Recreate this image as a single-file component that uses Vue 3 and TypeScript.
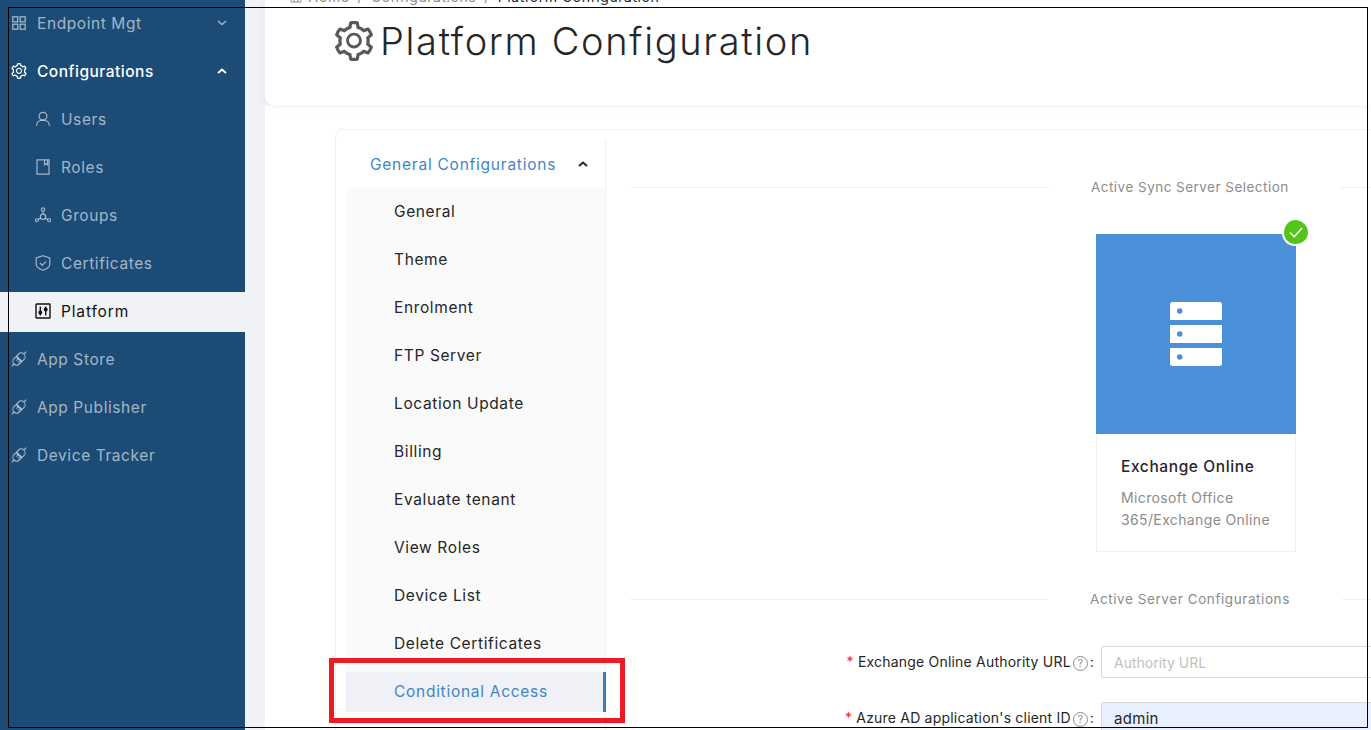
<script setup lang="ts">
const subItems: string[] = ['General', 'Theme', 'Enrolment', 'FTP Server', 'Location Update', 'Billing', 'Evaluate tenant', 'View Roles', 'Device List', 'Delete Certificates']
const gear = 'M924.8 625.7l-65.5-56c3.1-19 4.7-38.4 4.7-57.8s-1.6-38.8-4.7-57.8l65.5-56a32.03 32.03 0 0 0 9.3-35.2l-.9-2.6a443.74 443.74 0 0 0-79.7-137.9l-1.8-2.1a32.12 32.12 0 0 0-35.1-9.5l-81.3 28.9c-30-24.6-63.5-44-99.7-57.6l-15.7-85a32.05 32.05 0 0 0-25.8-25.7l-2.7-.5c-52.1-9.4-106.9-9.4-159 0l-2.7.5a32.05 32.05 0 0 0-25.8 25.7l-15.8 85.4a351.86 351.86 0 0 0-99 57.4l-81.9-29.1a32 32 0 0 0-35.1 9.5l-1.8 2.1a446.02 446.02 0 0 0-79.7 137.9l-.9 2.6c-4.5 12.5-.8 26.5 9.3 35.2l66.3 56.6c-3.1 18.8-4.6 38-4.6 57.1 0 19.2 1.5 38.4 4.6 57.1L99 625.5a32.03 32.03 0 0 0-9.3 35.2l.9 2.6c18.1 50.4 44.9 96.9 79.7 137.9l1.8 2.1a32.12 32.12 0 0 0 35.1 9.5l81.9-29.1c29.8 24.5 63.1 43.9 99 57.4l15.8 85.4a32.05 32.05 0 0 0 25.8 25.7l2.7.5a449.4 449.4 0 0 0 159 0l2.7-.5a32.05 32.05 0 0 0 25.8-25.7l15.7-85a350 350 0 0 0 99.7-57.6l81.3 28.9a32 32 0 0 0 35.1-9.5l1.8-2.1c34.8-41.1 61.6-87.5 79.7-137.9l.9-2.6c4.5-12.3.8-26.3-9.3-35zM788.3 465.9c2.5 15.1 3.8 30.6 3.8 46.1s-1.3 31-3.8 46.1l-6.6 40.1 74.7 63.9a370.03 370.03 0 0 1-42.6 73.6L721 702.8l-31.4 25.8c-23.9 19.6-50.5 35-79.3 45.8l-38.1 14.3-17.9 97a377.5 377.5 0 0 1-85 0l-17.9-97.2-37.8-14.5c-28.5-10.8-55-26.2-78.7-45.7l-31.4-25.9-93.4 33.2c-17-22.9-31.2-47.6-42.6-73.6l75.5-64.5-6.5-40c-2.4-14.9-3.7-30.3-3.7-45.5 0-15.3 1.2-30.6 3.7-45.5l6.5-40-75.5-64.5c11.3-26.1 25.6-50.7 42.6-73.6l93.4 33.2 31.4-25.9c23.7-19.5 50.2-34.9 78.7-45.7l37.9-14.3 17.9-97.2c28.1-3.2 56.8-3.2 85 0l17.9 97 38.1 14.3c28.7 10.8 55.4 26.2 79.3 45.8l31.4 25.8 92.8-32.9c17 22.9 31.2 47.6 42.6 73.6L781.8 426l6.5 39.9zM512 326c-97.2 0-176 78.8-176 176s78.8 176 176 176 176-78.8 176-176-78.8-176-176-176zm79.2 255.2A111.6 111.6 0 0 1 512 614c-29.9 0-58-11.7-79.2-32.8A111.6 111.6 0 0 1 400 502c0-29.9 11.7-58 32.8-79.2C454 401.6 482.1 390 512 390c29.9 0 58 11.6 79.2 32.8A111.6 111.6 0 0 1 624 502c0 29.9-11.7 58-32.8 79.2z'
</script>

<template>
  <div class="page">
    <aside class="sidebar">
      <div class="nav-item">
        <svg class="ico" viewBox="0 0 16 16" fill="none" stroke="currentColor" stroke-width="1.3"><rect x="1.800" y="1.800" width="5" height="5"/><rect x="9.200" y="1.800" width="5" height="5"/><rect x="1.800" y="9.200" width="5" height="5"/><rect x="9.200" y="9.200" width="5" height="5"/></svg>
        <span class="grow">Endpoint Mgt</span>
        <svg class="caret" viewBox="0 0 10 6" fill="none" stroke="currentColor" stroke-width="1.400"><path d="M1 1l4 3.600L9 1"/></svg>
      </div>
      <div class="nav-item open">
        <svg class="ico" viewBox="64 64 896 896" fill="currentColor"><path :d="gear"/></svg>
        <span class="grow">Configurations</span>
        <svg class="caret" viewBox="0 0 10 6" fill="none" stroke="currentColor" stroke-width="2"><path d="M1 5l4-3.400L9 5"/></svg>
      </div>
      <div class="nav-item sub">
        <svg class="ico" viewBox="0 0 16 16" fill="none" stroke="currentColor" stroke-width="1.200"><circle cx="8" cy="5.200" r="3.900"/><path d="M1.500 15c0-3.600 2.700-5.900 6.500-5.900s6.500 2.300 6.500 5.900"/></svg>
        <span>Users</span>
      </div>
      <div class="nav-item sub">
        <svg class="ico" viewBox="0 0 16 16" fill="none" stroke="currentColor" stroke-width="1.200"><path d="M2 .8h12v14.400H2zM9.500 .8v5l1.500-1 1.500 1v-5"/></svg>
        <span>Roles</span>
      </div>
      <div class="nav-item sub">
        <svg class="ico" viewBox="0 0 16 16" fill="none" stroke="currentColor" stroke-width="1.100"><circle cx="8" cy="2.600" r="1.700"/><circle cx="1.900" cy="13.300" r="1.500"/><circle cx="14.100" cy="13.300" r="1.500"/><circle cx="8" cy="9.800" r="2.700"/><path d="M8 4.300v2.800M3.300 12.500l2.400-1.400M12.700 12.500l-2.400-1.400"/></svg>
        <span>Groups</span>
      </div>
      <div class="nav-item sub">
        <svg class="ico" viewBox="0 0 16 16" fill="none" stroke="currentColor" stroke-width="1.200"><path d="M8 .7l6.800 2.300v6.300c0 2.800-3.600 5-6.800 6-3.200-1-6.800-3.200-6.800-6V3z"/><path d="M5 8l2.300 2.300 3.700-4"/></svg>
        <span>Certificates</span>
      </div>
      <div class="nav-item sub selected">
        <svg class="ico" viewBox="0 0 16 16" fill="none" stroke="currentColor" stroke-width="1.400"><rect x="1" y="1" width="14" height="14" rx=".5"/><path d="M5.300 3.500v9M10.700 3.500v9"/><circle cx="5.300" cy="9.500" r="1.300" fill="currentColor"/><circle cx="10.700" cy="6.500" r="1.300" fill="currentColor"/></svg>
        <span>Platform</span>
      </div>
      <div v-for="name in ['App Store', 'App Publisher', 'Device Tracker']" :key="name" class="nav-item">
        <svg class="ico" viewBox="0 0 16 16" fill="none" stroke="currentColor" stroke-width="1.100"><path d="M5 5.600l5.400 5.400-2 2a3.800 3.800 0 0 1-5.400-5.400zM11 10.400L5.600 5l2-2a3.800 3.800 0 0 1 5.400 5.400zM.6 15.400l2.400-2.400M15.400.6L13 3M7.200 7.800L5.400 9.600M9 9.600l-1.800 1.800"/></svg>
        <span>{{ name }}</span>
      </div>
    </aside>

    <main class="main">
      <header class="head">
        <div class="crumbs">
          <svg class="crumb-ico" viewBox="0 0 12 12" fill="none" stroke="currentColor"><path d="M1 1h10v10H1zM1 4h10M4 4v7M8 4v7"/></svg>
          <span>Home</span><i>/</i><span>Configurations</span><i>/</i><b>Platform Configuration</b>
        </div>
        <h1 class="title">
          <svg class="title-ico" viewBox="64 64 896 896" fill="#595959"><path :d="gear"/></svg>
          <span>Platform Configuration</span>
        </h1>
      </header>

      <section class="body">
        <div class="panel">
          <nav class="menu">
            <div class="menu-head">
              <span>General Configurations</span>
              <svg class="menu-caret" viewBox="0 0 10 6" fill="none" stroke="#262626" stroke-width="2"><path d="M1 5l4-3.400L9 5"/></svg>
            </div>
            <div class="menu-list">
              <div v-for="s in subItems" :key="s" class="menu-item">{{ s }}</div>
              <div class="menu-item active">Conditional Access</div>
            </div>
          </nav>

          <div class="content">
            <div class="divider first"><span>Active Sync Server Selection</span></div>
            <div class="card-row">
              <div class="card">
                <div class="cover">
                  <svg class="server" viewBox="0 0 52 64">
                    <g fill="#fff">
                      <path d="M2.500 0h47a2.500 2.500 0 0 1 2.500 2.500V18H0V2.500A2.500 2.500 0 0 1 2.500 0z"/>
                      <rect x="0" y="23" width="52" height="18"/>
                      <path d="M0 46h52v15.500a2.500 2.500 0 0 1-2.500 2.500h-47A2.500 2.500 0 0 1 0 61.500z"/>
                    </g>
                    <g fill="#4a90d9">
                      <circle cx="9.700" cy="9" r="2.800"/>
                      <circle cx="9.700" cy="32" r="2.800"/>
                      <circle cx="9.700" cy="55" r="2.800"/>
                    </g>
                  </svg>
                </div>
                <div class="card-body">
                  <div class="card-title">Exchange Online</div>
                  <div class="card-desc">Microsoft Office 365/Exchange Online</div>
                </div>
                <span class="badge">
                  <svg viewBox="0 0 24 24" fill="none" stroke="#fff" stroke-width="1.500"><path d="M6 12.500l4.200 4.300L18 8"/></svg>
                </span>
              </div>
            </div>
            <div class="divider second"><span>Active Server Configurations</span></div>
            <div class="field">
              <label class="label"><em>*</em> Exchange Online Authority URL<span class="q">?</span>:</label>
              <div class="input placeholder">Authority URL</div>
            </div>
            <div class="field">
              <label class="label"><em>*</em> Azure AD application's client ID<span class="q">?</span>:</label>
              <div class="input filled">admin</div>
            </div>
          </div>
        </div>
      </section>
    </main>

    <div class="frame"></div>
    <div class="callout"></div>
  </div>
</template>

<style>
html, body { margin: 0; overflow: hidden; }
</style>

<style scoped>
.page {
  position: relative;
  display: flex;
  width: 1371px;
  height: 730px;
  overflow: hidden;
  background: #f0f2f5;
  font-family: Inter, "Open Sans", sans-serif;
  font-size: 15.500px;
  color: #262626;
}
.sidebar {
  flex: none;
  width: 245px;
  padding-top: 4px;
  background: #1c4b75;
  color: rgba(255, 255, 255, .6);
  box-sizing: border-box;
}
.nav-item {
  display: flex;
  align-items: center;
  height: 40px;
  margin-bottom: 8px;
  padding: 0 0 2px 11px;
  box-sizing: border-box;
  letter-spacing: .58px;
}
.nav-item.open { color: #fff; font-weight: 500; letter-spacing: .5px; }
.nav-item.sub { padding-left: 35px; }
.nav-item.selected { background: #f0f2f5; color: #111; letter-spacing: .85px; }
.ico { width: 16px; height: 16px; margin-right: 10px; flex: none; }
.grow { flex: 1; }
.caret { width: 10px; height: 6px; margin-right: 18px; }
.main { flex: 1; min-width: 0; padding-left: 20px; display: flex; flex-direction: column; }
.head {
  position: relative;
  height: 105px;
  flex: none;
  background: #fff;
  border-radius: 0 0 0 8px;
  box-shadow: 0 2px 8px rgba(0, 0, 0, .05);
  z-index: 1;
}
.crumbs {
  position: absolute;
  left: 25px;
  top: -12px;
  display: flex;
  align-items: center;
  gap: 6px;
  font-size: 14px;
  letter-spacing: .55px;
  color: #8c8c8c;
  white-space: nowrap;
}
.crumbs b { font-weight: 400; color: #262626; }
.crumbs i { font-style: normal; margin: 0 2px; }
.crumb-ico { width: 12px; height: 12px; }
.title {
  margin: 0;
  padding: 18px 0 0 69px;
  display: flex;
  align-items: center;
  font-size: 38px;
  line-height: 46px;
  font-weight: 300;
  letter-spacing: 1.680px;
  color: #262626;
  white-space: nowrap;
}
.title-ico { width: 40px; height: 40px; margin-right: 6px; flex: none; }
.body { flex: 1; background: #fff; padding: 24px 0 0 70px; min-height: 0; }
.panel {
  display: flex;
  width: 1200px;
  height: 700px;
  padding: 10px 0 0 10px;
  box-sizing: border-box;
  border: 1px solid #f0f0f0;
  border-radius: 8px;
}
.menu { flex: none; width: 260px; border-right: 1px solid #f0f0f0; box-sizing: border-box; }
.menu-head {
  display: flex;
  align-items: center;
  height: 48px;
  padding-left: 24px;
  color: #3f86c7;
  letter-spacing: .76px;
}
.menu-head span { flex: 1; }
.menu-caret { width: 10px; height: 6px; margin-right: 17px; }
.menu-list { background: #fafafa; padding-top: 4px; }
.menu-item {
  display: flex;
  align-items: center;
  height: 40px;
  margin-bottom: 8px;
  padding: 0 0 2px 48px;
  box-sizing: border-box;
  letter-spacing: .62px;
}
.menu-item.active { background: #eff1f6; color: #3f86c7; border-right: 3px solid #3f7fb8; margin-right: -1px; letter-spacing: .72px; }
.content { flex: 1; min-width: 0; padding-left: 24px; }
.divider {
  display: flex;
  align-items: center;
  width: 1120px;
  height: 24px;
  color: #8c8c8c;
  font-size: 13.500px;
  letter-spacing: .47px;
  white-space: nowrap;
}
.divider::before, .divider::after { content: ""; height: 1px; background: #f0f0f0; }
.divider::before { width: 419px; flex: none; }
.divider::after { flex: 1; }
.divider span { padding: 0 52px 0 42px; }
.first { margin-top: 35px; }
.second { margin-top: 35px; letter-spacing: .58px; }
.second::before { width: 418px; }
.card-row { padding: 35px 0 0 466px; }
.card {
  position: relative;
  width: 200px;
  height: 318px;
  box-sizing: border-box;
  border: 1px solid #f0f0f0;
  border-top: 0;
}
.cover { margin: 0 -1px; height: 200px; background: #4a90d9; display: flex; align-items: center; justify-content: center; }
.server { width: 52px; height: 64px; }
.card-body { padding: 23px 24px 0; }
.card-title { font-weight: 500; letter-spacing: .6px; color: #262626; margin-bottom: 10px; line-height: 20px; }
.card-desc { color: #8c8c8c; font-size: 14px; line-height: 22px; letter-spacing: .37px; }
.badge {
  position: absolute;
  right: -13px;
  top: -14px;
  width: 24px;
  height: 24px;
  background: #52c41a;
  border-radius: 50%;
  border: 2px solid #fff;
  border-top: 0;
  border-right: 0;
  box-sizing: content-box;
}
.badge svg { display: block; width: 24px; height: 24px; }
.field { display: flex; align-items: center; height: 32px; margin-bottom: 24px; }
.second + .field { margin-top: 35px; }
.label {
  flex: none;
  width: 464px;
  text-align: right;
  font-size: 14px;
  letter-spacing: .2px;
  white-space: nowrap;
  margin-right: 7px;
}
.label em { font-style: normal; color: #f5222d; }
.q {
  display: inline-flex;
  align-items: center;
  justify-content: center;
  width: 13px;
  height: 13px;
  margin: 0 2px;
  border: 1px solid #8c8c8c;
  border-radius: 50%;
  font-size: 10px;
  letter-spacing: 0;
  color: #8c8c8c;
}
.input {
  width: 400px;
  height: 32px;
  box-sizing: border-box;
  border: 1px solid #d9d9d9;
  border-radius: 2px;
  padding: 0 12px;
  display: flex;
  align-items: center;
  font-size: 14px;
}
.placeholder { color: #bfbfbf; }
.filled { background: #e8f0fe; color: #262626; font-size: 15px; letter-spacing: .3px; }
.frame {
  position: absolute;
  left: 8px;
  top: 7px;
  width: 1358px;
  height: 719px;
  border: 1px solid #000;
  pointer-events: none;
  z-index: 5;
}
.callout {
  position: absolute;
  left: 329px;
  top: 658px;
  width: 296px;
  height: 65px;
  box-sizing: border-box;
  border: 5px solid #ed1c24;
  pointer-events: none;
  z-index: 5;
}
</style>
